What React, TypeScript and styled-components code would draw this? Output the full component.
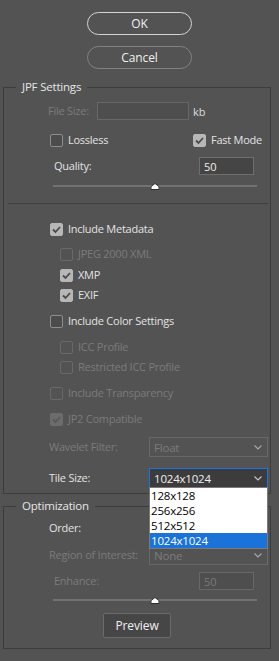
import styled, { createGlobalStyle } from 'styled-components';

const GlobalStyle = createGlobalStyle`
  html, body {
    margin: 0;
    padding: 0;
    background: #535353;
  }
  body {
    font-family: 'Open Sans', 'Noto Sans', sans-serif;
    font-size: 11px;
    color: #e4e4e4;
  }
`;

const Dialog = styled.div`
  width: 279px;
  height: 661px;
  box-sizing: border-box;
  padding-top: 12px;
  background: #535353;
  overflow: hidden;
`;

const ButtonStack = styled.div`
  display: flex;
  flex-direction: column;
  align-items: center;
  gap: 11px;
`;

const PillButton = styled.button<{ $primary?: boolean }>`
  width: 105px;
  height: 23px;
  box-sizing: border-box;
  padding: 0;
  border-radius: 12px;
  border: ${({ $primary }) => ($primary ? '1.5px solid #d4d4d4' : '1px solid #828282')};
  background: transparent;
  color: #f0f0f0;
  font-family: 'Open Sans', sans-serif;
  font-size: 12px;
  letter-spacing: -0.1px;
  line-height: 20px;
`;

const Group = styled.fieldset<{ $mt: number; $pb: number }>`
  margin: ${({ $mt }) => $mt}px 8px 0 3px;
  padding: 0 0 ${({ $pb }) => $pb}px;
  border: 1px solid #3c3c3c;
  min-width: 0;
`;

const Legend = styled.legend`
  margin-left: 12px;
  padding: 0 6px;
  font-size: 11.5px;
  letter-spacing: -0.2px;
  line-height: 16px;
  color: #e6e6e6;
`;

const Row = styled.div<{ $mt: number; $h: number; $pl: number }>`
  display: flex;
  align-items: center;
  margin-top: ${({ $mt }) => $mt}px;
  height: ${({ $h }) => $h}px;
  padding-left: ${({ $pl }) => $pl}px;
`;

const CenterRow = styled.div<{ $mt: number }>`
  display: flex;
  justify-content: center;
  margin-top: ${({ $mt }) => $mt}px;
`;

const Label = styled.span<{ $w: number; $disabled?: boolean }>`
  width: ${({ $w }) => $w}px;
  flex: none;
  font-size: 11px;
  letter-spacing: -0.25px;
  line-height: 16px;
  white-space: nowrap;
  color: ${({ $disabled }) => ($disabled ? '#7b7b7b' : '#e2e2e2')};
`;

const Unit = styled.span`
  margin-left: 4px;
  font-size: 11px;
  color: #dedede;
`;

const Field = styled.input<{ $w: number; $dark?: boolean }>`
  width: ${({ $w }) => $w}px;
  height: 18px;
  box-sizing: border-box;
  margin: 0;
  padding: 0 4px;
  border: 1px solid ${({ $dark }) => ($dark ? '#6e6e6e' : '#676767')};
  border-radius: 0;
  background: ${({ $dark }) => ($dark ? '#454545' : '#4e4e4e')};
  color: #ececec;
  font-family: 'Open Sans', sans-serif;
  font-size: 11px;
  outline: none;

  &:disabled {
    color: #7a7a7a;
  }
`;

const CheckItem = styled.label<{ $w?: number; $disabled?: boolean }>`
  display: flex;
  align-items: center;
  gap: 5px;
  width: ${({ $w }) => ($w ? `${$w}px` : 'auto')};
  font-size: 11px;
  letter-spacing: -0.25px;
  line-height: 16px;
  white-space: nowrap;
  color: ${({ $disabled }) => ($disabled ? '#7b7b7b' : '#e2e2e2')};
`;

const Box = styled.span<{ $checked?: boolean; $disabled?: boolean }>`
  display: flex;
  align-items: center;
  justify-content: center;
  width: 13px;
  height: 13px;
  box-sizing: border-box;
  flex: none;
  border-radius: 2px;
  border: 1px solid
    ${({ $checked, $disabled }) =>
      $checked ? ($disabled ? '#6c6c6c' : '#b7b7b7') : $disabled ? '#696969' : '#8d8d8d'};
  background: ${({ $checked, $disabled }) =>
    $checked ? ($disabled ? '#6c6c6c' : '#b7b7b7') : $disabled ? 'transparent' : '#4c4c4c'};
`;

const Separator = styled.div`
  margin: 13px 2px 0 4px;
  height: 1px;
  background: #3e3e3e;
`;

const SliderTrack = styled.div<{ $mt: number }>`
  position: relative;
  margin: ${({ $mt }) => $mt}px 0 0 49px;
  width: 204px;
  height: 8px;

  &::before {
    content: '';
    position: absolute;
    left: 0;
    right: 0;
    top: 3px;
    height: 2px;
    background: #727272;
  }
`;

const Thumb = styled.svg`
  position: absolute;
  left: 50%;
  top: 1px;
  transform: translateX(-50%);
`;

const SelectWrap = styled.div`
  position: relative;
`;

const Select = styled.div<{ $focused?: boolean; $disabled?: boolean }>`
  display: flex;
  align-items: center;
  justify-content: space-between;
  width: 119px;
  height: 20px;
  box-sizing: border-box;
  padding: 0 5px 0 4px;
  border: 1px solid ${({ $focused }) => ($focused ? '#1d73e3' : '#686868')};
  background: ${({ $focused }) => ($focused ? '#3c3c3c' : 'transparent')};
  color: ${({ $disabled }) => ($disabled ? '#7c7c7c' : '#f0f0f0')};
  font-size: 11.5px;
  letter-spacing: -0.2px;
`;

const Menu = styled.ul`
  position: absolute;
  left: 0;
  top: 19px;
  z-index: 2;
  width: 119px;
  box-sizing: border-box;
  margin: 0;
  padding: 0;
  list-style: none;
  border: 1px solid #7a7a7a;
  background: #ffffff;
`;

const MenuItem = styled.li<{ $selected?: boolean }>`
  height: 15px;
  padding-left: 1px;
  font-size: 11.5px;
  letter-spacing: -0.2px;
  line-height: 15px;
  color: ${({ $selected }) => ($selected ? '#ffffff' : '#000000')};
  background: ${({ $selected }) => ($selected ? '#1b72d9' : 'transparent')};
`;

const SmallButton = styled.button`
  width: 68px;
  height: 25px;
  box-sizing: border-box;
  padding: 0;
  border: 1px solid #6b6b6b;
  border-radius: 2px;
  background: #464646;
  color: #f0f0f0;
  font-family: 'Open Sans', sans-serif;
  font-size: 12px;
  letter-spacing: -0.1px;
`;

const Check = ({ checked, disabled }: { checked?: boolean; disabled?: boolean }) => (
  <Box $checked={checked} $disabled={disabled}>
    {checked && (
      <svg width="11" height="11" viewBox="0 0 11 11">
        <polyline
          points="2,5.5 4.5,8 9,3"
          fill="none"
          stroke={disabled ? '#585858' : '#4a4a4a'}
          strokeWidth="1.8"
        />
      </svg>
    )}
  </Box>
);

const Chevron = ({ color }: { color: string }) => (
  <svg width="8" height="5" viewBox="0 0 8 5">
    <polyline points="0.5,0.5 4,4 7.5,0.5" fill="none" stroke={color} strokeWidth="1.1" />
  </svg>
);

const Slider = ({ mt }: { mt: number }) => (
  <SliderTrack $mt={mt}>
    <Thumb width="9" height="7" viewBox="0 0 9 7">
      <polygon points="4.5,0.5 8.5,3.5 8.5,6.5 0.5,6.5 0.5,3.5" fill="#ffffff" stroke="#2e2e2e" />
    </Thumb>
  </SliderTrack>
);

const tileSizes = ['128x128', '256x256', '512x512', '1024x1024'];

export default function App() {
  return (
    <Dialog>
      <GlobalStyle />
      <ButtonStack>
        <PillButton $primary>OK</PillButton>
        <PillButton>Cancel</PillButton>
      </ButtonStack>

      <Group $mt={10} $pb={5}>
        <Legend>JPF Settings</Legend>
        <Row $mt={7} $h={18} $pl={44}>
          <Label $w={49} $disabled>File Size:</Label>
          <Field $w={92} disabled value="" readOnly />
          <Unit>kb</Unit>
        </Row>
        <Row $mt={13} $h={14} $pl={46}>
          <CheckItem $w={143}>
            <Check />
            Lossless
          </CheckItem>
          <CheckItem>
            <Check checked />
            Fast Mode
          </CheckItem>
        </Row>
        <Row $mt={10} $h={18} $pl={50}>
          <Label $w={145}>Quality:</Label>
          <Field $w={55} $dark value="50" readOnly />
        </Row>
        <Slider mt={7} />
        <Separator />
        <Row $mt={18} $h={14} $pl={46}>
          <CheckItem>
            <Check checked />
            Include Metadata
          </CheckItem>
        </Row>
        <Row $mt={11} $h={14} $pl={56}>
          <CheckItem $disabled>
            <Check disabled />
            JPEG 2000 XML
          </CheckItem>
        </Row>
        <Row $mt={7} $h={14} $pl={56}>
          <CheckItem>
            <Check checked />
            XMP
          </CheckItem>
        </Row>
        <Row $mt={6} $h={14} $pl={56}>
          <CheckItem>
            <Check checked />
            EXIF
          </CheckItem>
        </Row>
        <Row $mt={12} $h={14} $pl={46}>
          <CheckItem>
            <Check />
            Include Color Settings
          </CheckItem>
        </Row>
        <Row $mt={12} $h={14} $pl={56}>
          <CheckItem $disabled>
            <Check disabled />
            ICC Profile
          </CheckItem>
        </Row>
        <Row $mt={6} $h={14} $pl={56}>
          <CheckItem $disabled>
            <Check disabled />
            Restricted ICC Profile
          </CheckItem>
        </Row>
        <Row $mt={12} $h={14} $pl={46}>
          <CheckItem $disabled>
            <Check disabled />
            Include Transparency
          </CheckItem>
        </Row>
        <Row $mt={12} $h={14} $pl={46}>
          <CheckItem $disabled>
            <Check checked disabled />
            JP2 Compatible
          </CheckItem>
        </Row>
        <Row $mt={11} $h={20} $pl={45}>
          <Label $w={100} $disabled>Wavelet Filter:</Label>
          <Select $disabled>
            Float
            <Chevron color="#a8a8a8" />
          </Select>
        </Row>
        <Row $mt={11} $h={20} $pl={45}>
          <Label $w={100}>Tile Size:</Label>
          <SelectWrap>
            <Select $focused>
              1024x1024
              <Chevron color="#c8c8c8" />
            </Select>
            <Menu>
              {tileSizes.map((size) => (
                <MenuItem key={size} $selected={size === '1024x1024'}>
                  {size}
                </MenuItem>
              ))}
            </Menu>
          </SelectWrap>
        </Row>
      </Group>

      <Group $mt={4} $pb={10}>
        <Legend>Optimization</Legend>
        <Row $mt={4} $h={20} $pl={45}>
          <Label $w={100}>Order:</Label>
          <Select>
            <span />
            <Chevron color="#c8c8c8" />
          </Select>
        </Row>
        <Row $mt={7} $h={20} $pl={45}>
          <Label $w={100} $disabled>Region of Interest:</Label>
          <Select $disabled>
            None
            <Chevron color="#a8a8a8" />
          </Select>
        </Row>
        <Row $mt={7} $h={18} $pl={50}>
          <Label $w={145} $disabled>Enhance:</Label>
          <Field $w={55} disabled value="50" readOnly />
        </Row>
        <Slider mt={6} />
        <CenterRow $mt={9}>
          <SmallButton>Preview</SmallButton>
        </CenterRow>
      </Group>
    </Dialog>
  );
}
